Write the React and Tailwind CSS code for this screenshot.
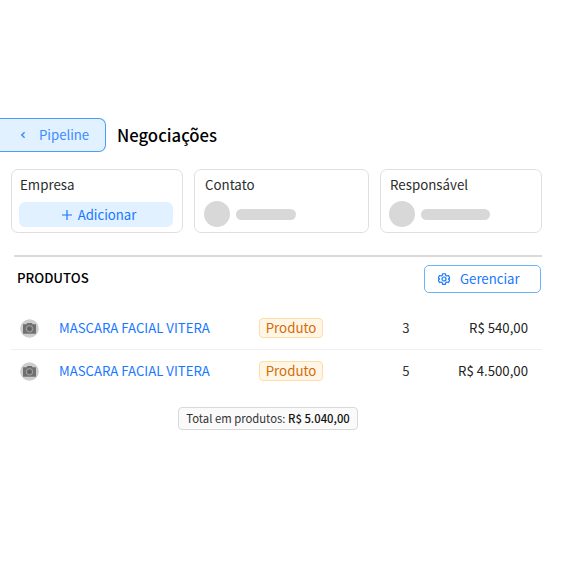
import React from "react";

const products = [
  { id: 1, name: "MASCARA FACIAL VITERA", type: "Produto", quantity: 3, price: "R$ 540,00" },
  { id: 2, name: "MASCARA FACIAL VITERA", type: "Produto", quantity: 5, price: "R$ 4.500,00" },
];

const ChevronIcon = () => (
  <svg viewBox="0 0 6 8" className="h-2 w-1.5" fill="none" stroke="currentColor" strokeWidth="1.5">
    <path d="M4.6 1.2 1.8 4l2.800 2.800" />
  </svg>
);

const PlusIcon = () => (
  <svg viewBox="0 0 10 10" className="h-2.5 w-2.5" fill="none" stroke="currentColor" strokeWidth="1.2">
    <path d="M5 0v10M0 5h10" />
  </svg>
);

const GearIcon = () => (
  <svg viewBox="0 0 24 24" className="h-3 w-3" fill="none" stroke="currentColor" strokeWidth="2.4" strokeLinejoin="round">
    <path d="M9.3 1.5h5.4l.8 3.4 2 1.2 3.3-1 2.7 4.6-2.5 2.4 2.5 2.3-2.7 4.7-3.3-1-2 1.2-.8 3.3H9.3l-.8-3.3-2-1.2-3.3 1L.5 14.4l2.500-2.300L.5 9.700l2.700-4.600 3.300 1 2-1.200z" />
    <circle cx="12" cy="12" r="4" />
  </svg>
);

const ProductAvatar = () => (
  <svg viewBox="0 0 19 19" className="h-[19px] w-[19px]">
    <circle cx="9.5" cy="9.5" r="9.3" fill="#cdcdcd" />
    <path d="M3 5.200h3.400l1-1.200h4.300l1 1.200H16v9.600H3z" fill="#707070" />
    <circle cx="9.5" cy="9.8" r="3.3" fill="none" stroke="#a9a9a9" strokeWidth="0.9" />
    <circle cx="9.5" cy="9.8" r="1.7" fill="#606060" />
  </svg>
);

const InfoCard = ({ title, className, children }) => (
  <div className={`h-16 rounded-[7px] border border-[#dfdfdf] bg-white pt-[5px] ${className}`}>
    <p className="pl-px text-[13.3px] leading-5 text-[#2b2b2b]">{title}</p>
    {children}
  </div>
);

const Person = ({ barClass }) => (
  <div className="mt-1.5 flex items-center gap-[6px]">
    <span className="size-[26px] rounded-full bg-[#d8d8d8]" />
    <span className={`h-[11px] rounded-full bg-[#d8d8d8] ${barClass}`} />
  </div>
);

const App = () => (
  <div className="h-[563px] w-[563px] overflow-hidden bg-white pt-[118px] font-['Noto_Sans_CJK_SC','Noto_Sans',sans-serif]">
    <header className="flex h-[34px] items-center gap-[11px]">
      <button className="flex h-[34px] w-[106px] items-center gap-[13px] rounded-r-[7px] border border-l-0 border-[#4b9ffa] bg-[#e1f1ff] pl-5 text-[13.2px] text-[#3b8cff]">
        <ChevronIcon />
        Pipeline
      </button>
      <h1 className="text-[16.7px] leading-6 font-medium text-black">Negociações</h1>
    </header>

    <section className="mt-[17px] flex pl-[11px]">
      <InfoCard title="Empresa" className="w-[172px] pl-[7px]">
        <button className="mt-[7px] flex h-[25px] w-[154px] items-center justify-center gap-1.5 rounded-[6px] bg-[#e1f1ff] pl-1.5 text-[13.2px] text-[#1677ff]">
          <PlusIcon />
          Adicionar
        </button>
      </InfoCard>
      <InfoCard title="Contato" className="ml-[11px] w-[175px] pl-[9px]">
        <Person barClass="w-[60px]" />
      </InfoCard>
      <InfoCard title="Responsável" className="ml-[11px] w-[162px] pl-2">
        <Person barClass="w-[69px]" />
      </InfoCard>
    </section>

    <section className="mt-[22px]">
      <div className="ml-3.5 h-0.5 w-[528px] bg-[#dadada]" />
      <div className="mt-2 flex h-7 items-start justify-between pr-[22px] pl-[17px]">
        <h2 className="pt-[3px] text-[13.2px] leading-5 font-medium text-black">PRODUTOS</h2>
        <button className="flex h-7 w-[117px] items-center gap-[10px] rounded-[5px] border border-[#6bb3ff] bg-white pb-px pl-[13px] text-[13.2px] text-[#1677ff]">
          <GearIcon />
          Gerenciar
        </button>
      </div>

      <div className="mt-[14px] ml-[11px] w-[531px]">
        {products.map((product) => (
          <div
            key={product.id}
            className="grid h-[43px] grid-cols-[48px_200px_114px_66px_89px] items-center border-b border-[#f0f0f0] text-[13.2px] leading-5 last:border-transparent"
          >
            <span className="pl-[9px]"><ProductAvatar /></span>
            <span className="whitespace-nowrap text-[#1677ff]">{product.name}</span>
            <span className="mb-px flex h-5 w-[64px] items-center justify-center rounded-[4px] border border-[#ffdda8] bg-[#fff6e6] text-[13.3px] text-[#d46b08]">
              {product.type}
            </span>
            <span className="text-center text-[#333333]">{product.quantity}</span>
            <span className="text-right whitespace-nowrap text-[#222222]">{product.price}</span>
          </div>
        ))}
      </div>

      <div className="mt-[14px] ml-[178px] flex h-[23px] w-[180px] items-center justify-center rounded-[4px] border border-[#d9d9d9] bg-[#fafafa] text-[11.3px] whitespace-pre text-[#333333]">
        Total em produtos: <strong className="font-medium text-[#111111]">R$ 5.040,00</strong>
      </div>
    </section>
  </div>
);

export default App;
